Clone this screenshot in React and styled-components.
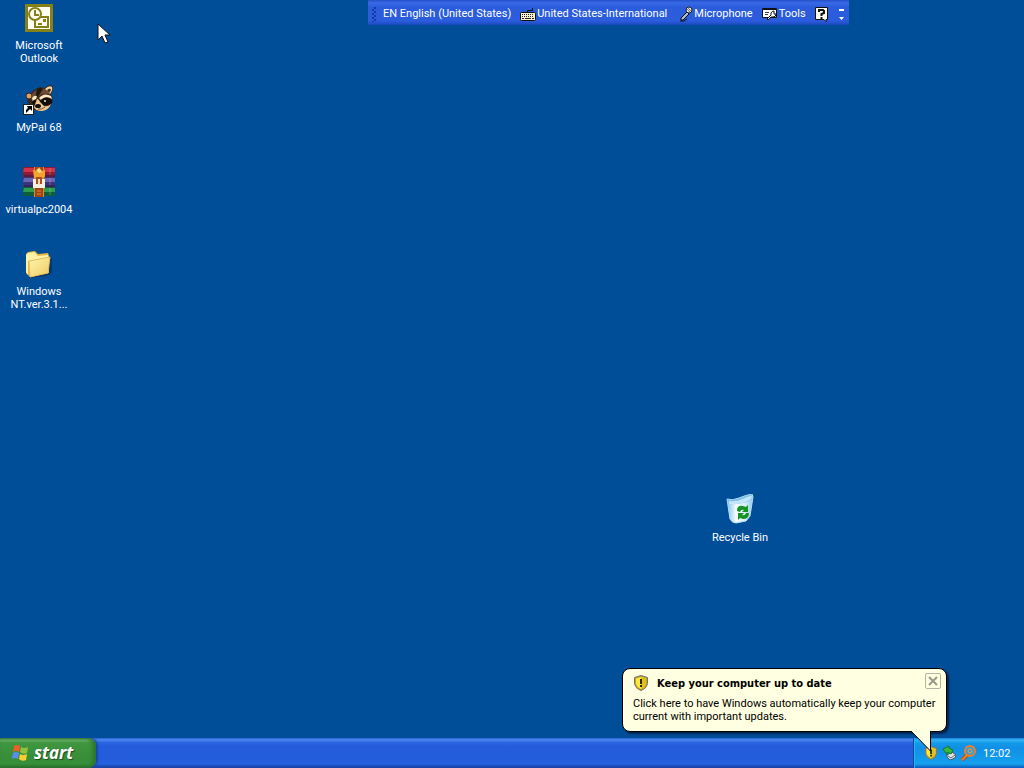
import React from "react";
import styled, { createGlobalStyle } from "styled-components";

const GlobalStyle = createGlobalStyle`
  * { box-sizing: border-box; }
  body {
    margin: 0;
    background: #004e98;
    font-family: Roboto, "Liberation Sans", sans-serif;
    font-size: 11px;
    line-height: 13px;
  }
  button {
    margin: 0;
    padding: 0;
    border: 0;
    background: none;
    font: inherit;
    color: inherit;
    cursor: default;
  }
  svg { display: block; flex: none; }
`;

const Screen = styled.div`
  position: relative;
  display: flex;
  flex-direction: column;
  min-height: 100vh;
  overflow: hidden;
  background: #004e98;
`;

const Desktop = styled.main`
  position: relative;
  flex: 1;
`;

const ShortcutList = styled.ul`
  display: grid;
  grid-auto-rows: 82px;
  width: 78px;
  margin: 0;
  padding: 2px 0 0;
  list-style: none;
`;

const Shortcut = styled.button`
  display: flex;
  flex-direction: column;
  align-items: center;
  gap: 5px;
  width: 78px;
  color: #fff;
  text-align: center;
  white-space: pre-line;
`;

const BinPlace = styled.div`
  position: absolute;
  right: 245px;
  bottom: 194px;
`;

const Pointer = styled.div`
  position: absolute;
  left: 97px;
  top: 23px;
`;

const LanguageBar = styled.div`
  position: absolute;
  top: 0;
  right: 175px;
  z-index: 1;
  display: flex;
  align-items: center;
  width: 481px;
  height: 25px;
  padding: 2px 3px 0;
  color: #fff;
  background: linear-gradient(#2450c8 0, #3a6ae6 3px, #2a5cdc 7px, #2a5cdc 21px, #1c48bc 100%);
`;

const BarButton = styled.button`
  display: flex;
  align-items: center;
  gap: 1px;
  height: 20px;
  margin-right: 9px;
  white-space: nowrap;
`;

const Grip = styled.div`
  width: 12px;
  flex: none;
`;

const Taskbar = styled.footer`
  display: flex;
  height: 30px;
  background: linear-gradient(
    #2a5fd6 0, #4a8cf0 2px, #2f68e4 4px, #245cdb 8px,
    #245edc 22px, #2562df 26px, #1c4cb8 28px, #1941a5 30px
  );
`;

const StartButton = styled.button`
  display: flex;
  align-items: center;
  gap: 5px;
  width: 96px;
  padding-left: 11px;
  color: #fff;
  font: italic bold 17px/24px "Open Sans", "Liberation Sans", sans-serif;
  text-shadow: 1px 1px 1px #1d4a1d;
  border-radius: 0 8px 8px 0;
  background: linear-gradient(#3c7c3c 0, #6bb46b 2px, #3f963f 5px, #388e38 20px, #36903a 26px, #276f2b 30px);
  box-shadow: inset -3px 0 4px #2a722c, 2px 0 2px #1b46ac;
`;

const Tasks = styled.div`
  flex: 1;
`;

const Tray = styled.div`
  display: flex;
  align-items: center;
  gap: 4px;
  width: 111px;
  padding-left: 10px;
  color: #fff;
  border-left: 1px solid #0b4a9c;
  box-shadow: inset 1px 0 0 #2ab2f6;
  background: linear-gradient(
    #0f7fd8 0, #35b4f4 2px, #149ae8 5px, #118fe6 10px,
    #139cec 22px, #16a0ee 26px, #107acb 28px, #095bc9 30px
  );
`;

const Clock = styled.time`
  margin-left: 2px;
`;

const Balloon = styled.section`
  position: absolute;
  right: 77px;
  bottom: 36px;
  z-index: 2;
  width: 325px;
  padding: 4px 5px 8px 10px;
  color: #000;
  background: #ffffe1;
  border: 1px solid #000;
  border-radius: 8px;
  box-shadow: 2px 2px 2px #00224e;
`;

const BalloonHead = styled.div`
  display: flex;
  align-items: center;
  height: 20px;
`;

const BalloonTitle = styled.h2`
  flex: 1;
  margin: 0 0 0 8px;
  font-family: "DejaVu Sans Condensed", "Liberation Sans", sans-serif;
  font-size: 11px;
  line-height: 13px;
  font-weight: bold;
`;

const CloseButton = styled.button`
  display: grid;
  place-items: center;
  align-self: flex-start;
  width: 16px;
  height: 16px;
  border: 1px solid #b4b4a4;
  border-radius: 2px;
`;

const Message = styled.button`
  display: block;
  margin-top: 4px;
  text-align: left;
  white-space: pre-line;
`;

const Tail = styled.div`
  position: absolute;
  right: 12px;
  top: 100%;
`;

const OutlookIcon = () => (
  <svg width="32" height="32" viewBox="0 0 32 32" aria-hidden="true">
    <rect x="2" y="2" width="28" height="28" fill="#878019" />
    <rect x="5" y="5" width="22" height="22" fill="#fffef0" />
    <rect x="12" y="15" width="13" height="10" fill="#fffef0" stroke="#878019" strokeWidth="2" />
    <path d="M15 22h4" stroke="#878019" strokeWidth="2" />
    <rect x="20" y="17" width="3" height="3" fill="#878019" />
    <circle cx="12" cy="12" r="6" fill="#fffef0" stroke="#878019" strokeWidth="2" />
    <path d="M12 8v5h4" fill="none" stroke="#878019" strokeWidth="2" />
  </svg>
);

const RaccoonIcon = () => (
  <svg width="32" height="32" viewBox="0 0 32 32" aria-hidden="true">
    <path d="M7 11q3-6 10-8l5 1 4-3q5 0 4 5l-2 4q3 6 0 11-4 6-11 6-6 0-9-4l-4-6Z" fill="#3a281d" />
    <circle cx="6" cy="12" r="3" fill="#d9a066" stroke="#3a281d" />
    <path d="M22 5q4-4 7-2 1 3-2 7Z" fill="#f1d2a2" />
    <path d="M24 6q2-2 4-1 0 2-2 4Z" fill="#4a3020" />
    <path d="M9 10q5-6 12-5 5 2 6 6-6-3-11 1l-4 5-4-2Z" fill="#6b4a30" />
    <path d="M14 5q3-2 6 0l-5 8-3 1Z" fill="#221812" />
    <path d="M16 14q5-6 12-2l1 3q-6-4-11 1Z" fill="#fbe6bd" />
    <path d="M9 14q2-3 5-2l-1 3q-2 0-3 3Z" fill="#fbe6bd" />
    <path d="M17 17q4-5 9-3 4 2 3 5-4 3-9 2Z" fill="#120e0c" />
    <path d="M9 18q2-3 5-2l0 4-3 2Z" fill="#120e0c" />
    <circle cx="22" cy="17" r="1" fill="#f7ead4" />
    <path d="M14 15q2 0 3 3l4 4q4 1 7-2-2 6-9 7-7 0-8-4Z" fill="#eec790" />
    <ellipse cx="15" cy="22" rx="3" ry="2" fill="#15100e" />
    <path d="m15 25q4 1 7-2" fill="none" stroke="#7b5430" />
    <rect x="0.500" y="20.500" width="10" height="10" fill="#fff" stroke="#222" />
    <path d="M4 22h5v5L7 25l-4 4v-3l2-2Z" fill="#000" />
  </svg>
);

const ArchiveIcon = () => (
  <svg width="32" height="32" viewBox="0 0 32 32" aria-hidden="true">
    <path d="M0 1h32v10H0q-1-5 0-10Z" fill="#8e1a34" />
    <path d="M1 2h31v4H0Z" fill="#cf3448" />
    <path d="M0 11h32v10H0q-1-5 0-10Z" fill="#3c3379" />
    <path d="M1 12h31v4H0Z" fill="#6c65b2" />
    <path d="M0 21h32v9H0q-1-4 0-9Z" fill="#0c5f38" />
    <path d="M1 22h31v4H0Z" fill="#2f9c50" />
    <path d="M1 10h31M1 20h31" stroke="#2b1b44" />
    <path d="M27 2v7m0 3v7m0 3v7" stroke="#fff" opacity=".25" />
    <rect x="11" y="1" width="10" height="30" fill="#9f4318" />
    <path d="M11.500 1v30M20.500 1v30" stroke="#d98a34" />
    <path d="m10 4 4 1 2-4 3 4 3-1v7l-5 3-6-2Z" fill="#f2a32e" />
    <path d="m13 4 3-2 3 4-3 1Z" fill="#ffd98a" />
    <path d="M10 13h3v5h6v-5h3v9H10Z" fill="#f6f0df" />
    <rect x="13" y="11" width="6" height="7" fill="#a8501f" />
    <path d="M16 13v6" stroke="#f1dcc0" strokeWidth="2" />
    <path d="M14 25h4M14 28h4" stroke="#e18d34" />
  </svg>
);

const FolderIcon = () => (
  <svg width="32" height="32" viewBox="0 0 32 32" aria-hidden="true">
    <defs>
      <linearGradient id="folderFace" x1="0" y1="0" x2="1" y2="1">
        <stop stopColor="#fff5b0" />
        <stop offset="1" stopColor="#f0cb62" />
      </linearGradient>
    </defs>
    <path d="M6 30 23 28l6-3V11l-1-2Z" fill="#07366a" />
    <path d="m3 6 2-2 7-1 3 3 10-1 1 3v17L7 29l-4-4Z" fill="#e3b84a" />
    <path d="m3 7 2-2 6-1 4 4 10-1v4L5 13v14l-2-3Z" fill="#fff1a6" />
    <path d="m6 13 21-4-2 16-18 4Z" fill="url(#folderFace)" stroke="#e3bd5c" />
  </svg>
);

const RecycleIcon = () => (
  <svg width="32" height="32" viewBox="0 0 32 32" aria-hidden="true">
    <defs>
      <linearGradient id="binBody">
        <stop stopColor="#7fc0ea" />
        <stop offset=".35" stopColor="#f6fdff" />
        <stop offset=".7" stopColor="#d5eefa" />
        <stop offset="1" stopColor="#8fc8ea" />
      </linearGradient>
    </defs>
    <path d="M3 5q5 2 12-1T28 0l1 3-3 19-4 5-10 2q-4 0-6-4Z" fill="url(#binBody)" stroke="#b5def2" />
    <path d="M3 5q5 2 12-1T28 0q1 7-9 9T4 10Z" fill="#84c2ea" />
    <path d="M5 7q8 1 14-2t9-3q-1 5-10 7T5 10Z" fill="#c5e8f9" />
    <path d="M13 17q0-6 6-5l3 1 2-2v7h-6l2-2q-3-1-4 2Z" fill="#169323" />
    <path d="M25 19q0 6-6 6l-3-1-2 2v-7h6l-2 2q3 1 4-2Z" fill="#169323" />
  </svg>
);

const CursorIcon = () => (
  <svg width="13" height="22" viewBox="0 0 13 22" aria-hidden="true">
    <path d="M1 1v16l4-4 3 7 3-1-3-7h5Z" fill="#fff" stroke="#111" strokeWidth="1" />
  </svg>
);

const GripIcon = () => (
  <svg width="6" height="16" viewBox="0 0 6 16" aria-hidden="true">
    {[1, 5, 9, 13].map((y) => (
      <g key={y}>
        <rect x="3" y={y} width="2" height="2" fill="#153c9e" />
        <rect x="1" y={y + 2} width="2" height="2" fill="#153c9e" />
      </g>
    ))}
  </svg>
);

const KeyboardIcon = () => (
  <svg width="16" height="16" viewBox="0 0 16 16" aria-hidden="true">
    <path d="M7.500 6V4.500h5V2" fill="none" stroke="#111" />
    <rect x="0.500" y="6.500" width="15" height="8" rx="1" fill="#f4f0d0" stroke="#111" />
    <path d="M2 8.500h12M2 10.500h12" stroke="#222" strokeDasharray="1 1" />
    <path d="M2 12.500h2m1 0h6m1 0h2" stroke="#222" />
  </svg>
);

const MicIcon = () => (
  <svg width="17" height="16" viewBox="-3 0 17 16" aria-hidden="true">
    <path d="M2 12 8 6l2 2-6 6-2 0Z" fill="#aebccc" stroke="#111" />
    <circle cx="10" cy="4" r="3" fill="#e2e5e4" stroke="#222" />
    <path d="M8 3l3 3M9 2l3 3" stroke="#777" />
    <path d="M1 15h4l3-2" fill="none" stroke="#111" />
  </svg>
);

const ToolsIcon = () => (
  <svg width="16" height="16" viewBox="0 0 16 16" aria-hidden="true">
    <path d="M.5 2.500h14v9H.5Z" fill="#fff" stroke="#111" />
    <path d="M1 3h13" stroke="#111" strokeWidth="2" />
    <path d="M3 6.500h4M3 8.500h3" stroke="#444" />
    <path d="m5 13 4-4V7q1-2 3-2v3h2q0 3-3 3H9l-3 3Z" fill="#fff" stroke="#111" />
  </svg>
);

const HelpIcon = () => (
  <svg width="14" height="16" viewBox="0 0 14 16" aria-hidden="true">
    <path d="M.5 1.500h12v12H11v2l-2-2H.5Z" fill="#ffffed" stroke="#111" />
    <path d="M4 6V4h4l1 1v2L6.500 8v2M6.500 11v2" fill="none" stroke="#111" strokeWidth="2" />
  </svg>
);

const OptionsIcon = () => (
  <svg width="7" height="16" viewBox="0 0 7 16" aria-hidden="true">
    <path d="M1 3h5v2H1ZM1 11h5l-2.500 3Z" fill="#fff" />
  </svg>
);

const ShieldIcon = ({ size }) => (
  <svg width={size} height={size} viewBox="0 0 16 16" aria-hidden="true">
    <path d="M8 .5 14.500 2.500v6q-1 5-6.500 7-5.500-2-6.500-7v-6Z" fill="#c9a01c" stroke="#70757c" />
    <path d="M8 2 13 3.500v5q-1 4-5 5.500-4-1.500-5-5.500v-5Z" fill="#fbe93c" />
    <path d="M8 2 13 3.500v5q-1 4-5 5.500Z" fill="#dfc01c" />
    <path d="M8 4v5m0 1v2" stroke="#292916" strokeWidth="2" />
  </svg>
);

const FlagIcon = () => (
  <svg width="18" height="18" viewBox="0 0 18 18" aria-hidden="true">
    <path d="M3 2q3-2 6 0L8 8Q5 6 2 8Z" fill="#f15d27" />
    <path d="M10 3q3 2 7 0l-1 6q-4 2-7-1Z" fill="#8fc33e" />
    <path d="M2 9q3-2 6 0l-1 6q-3-2-6 0Z" fill="#588df4" />
    <path d="M9 10q3 2 7 0l-1 6q-4 2-7-1Z" fill="#ffcf32" />
  </svg>
);

const RemoveHardwareIcon = () => (
  <svg width="15" height="16" viewBox="0 0 15 16" aria-hidden="true">
    <path d="m5 10 5-3 4 3-1 3-5 2-3-3Z" fill="#dfe4e5" stroke="#465969" />
    <path d="m6 11 3 2 4-3" fill="none" stroke="#5d7180" />
    <path d="m1 4 6-3v2l4 2-2 4-4-2v3Z" fill="#39ba3f" stroke="#16772b" />
  </svg>
);

const SearchIcon = () => (
  <svg width="16" height="16" viewBox="0 0 16 16" aria-hidden="true">
    <path d="m6 10-5 5" stroke="#a8501c" strokeWidth="4" />
    <path d="m6 10-5 5" stroke="#f47d24" strokeWidth="2" />
    <circle cx="9" cy="6" r="5" fill="#319fdd" stroke="#f47d24" strokeWidth="2" />
    <circle cx="9" cy="6" r="2" fill="none" stroke="#ff9a32" />
  </svg>
);

const CloseIcon = () => (
  <svg width="10" height="10" viewBox="0 0 10 10" aria-hidden="true">
    <path d="m1 1 8 8M9 1 1 9" stroke="#99998b" strokeWidth="2" />
  </svg>
);

const shortcuts = [
  { label: "Microsoft\nOutlook", Icon: OutlookIcon },
  { label: "MyPal 68", Icon: RaccoonIcon },
  { label: "virtualpc2004", Icon: ArchiveIcon },
  { label: "Windows\nNT.ver.3.1...", Icon: FolderIcon },
];

export default function App() {
  return (
    <Screen>
      <GlobalStyle />
      <Desktop>
        <ShortcutList>
          {shortcuts.map(({ label, Icon }) => (
            <li key={label}>
              <Shortcut type="button">
                <Icon />
                <span>{label}</span>
              </Shortcut>
            </li>
          ))}
        </ShortcutList>
        <BinPlace>
          <Shortcut type="button">
            <RecycleIcon />
            <span>Recycle Bin</span>
          </Shortcut>
        </BinPlace>
        <Pointer><CursorIcon /></Pointer>
      </Desktop>

      <LanguageBar role="toolbar" aria-label="Language bar">
        <Grip><GripIcon /></Grip>
        <BarButton type="button">EN English (United States)</BarButton>
        <BarButton type="button"><KeyboardIcon />United States-International</BarButton>
        <BarButton type="button"><MicIcon />Microphone</BarButton>
        <BarButton type="button"><ToolsIcon />Tools</BarButton>
        <BarButton type="button" aria-label="Help"><HelpIcon /></BarButton>
        <BarButton type="button" aria-label="Options"><OptionsIcon /></BarButton>
      </LanguageBar>

      <Taskbar>
        <StartButton type="button"><FlagIcon />start</StartButton>
        <Tasks />
        <Tray>
          <ShieldIcon size={14} />
          <RemoveHardwareIcon />
          <SearchIcon />
          <Clock>12:02</Clock>
        </Tray>
      </Taskbar>

      <Balloon>
        <BalloonHead>
          <ShieldIcon size={16} />
          <BalloonTitle>Keep your computer up to date</BalloonTitle>
          <CloseButton type="button" aria-label="Close"><CloseIcon /></CloseButton>
        </BalloonHead>
        <Message type="button">
          {"Click here to have Windows automatically keep your computer\ncurrent with important updates."}
        </Message>
        <Tail>
          <svg width="24" height="22" viewBox="0 0 24 22" aria-hidden="true">
            <path d="M1 0 20.500 20V0" fill="#ffffe1" stroke="#000" />
          </svg>
        </Tail>
      </Balloon>
    </Screen>
  );
}
